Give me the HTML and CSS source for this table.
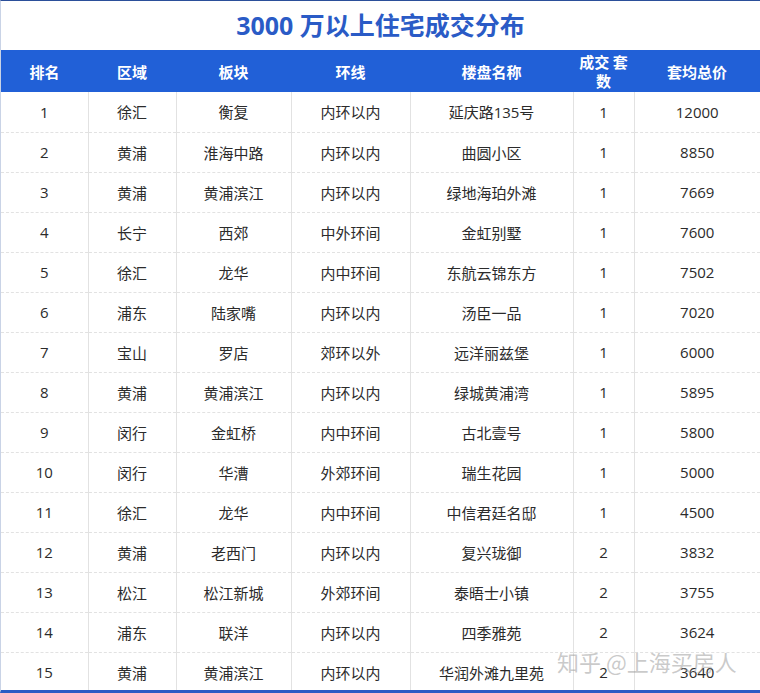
FILE: index.html
```html
<!DOCTYPE html>
<html lang="zh">
<head>
<meta charset="utf-8">
<link rel="stylesheet" href="styles.css">
</head>
<body>
<div class="sheet">
  <h1 class="title">3000 万以上住宅成交分布</h1>
  <table class="grid">
    <colgroup>
      <col class="c1"><col class="c2"><col class="c3"><col class="c4"><col class="c5"><col class="c6"><col class="c7">
    </colgroup>
    <thead>
      <tr><th>排名</th><th>区域</th><th>板块</th><th>环线</th><th>楼盘名称</th><th class="narrow">成交 套数</th><th>套均总价</th></tr>
    </thead>
    <tbody>
      <tr><td>1</td><td>徐汇</td><td>衡复</td><td>内环以内</td><td>延庆路135号</td><td>1</td><td>12000</td></tr>
      <tr><td>2</td><td>黄浦</td><td>淮海中路</td><td>内环以内</td><td>曲圆小区</td><td>1</td><td>8850</td></tr>
      <tr><td>3</td><td>黄浦</td><td>黄浦滨江</td><td>内环以内</td><td>绿地海珀外滩</td><td>1</td><td>7669</td></tr>
      <tr><td>4</td><td>长宁</td><td>西郊</td><td>中外环间</td><td>金虹别墅</td><td>1</td><td>7600</td></tr>
      <tr><td>5</td><td>徐汇</td><td>龙华</td><td>内中环间</td><td>东航云锦东方</td><td>1</td><td>7502</td></tr>
      <tr><td>6</td><td>浦东</td><td>陆家嘴</td><td>内环以内</td><td>汤臣一品</td><td>1</td><td>7020</td></tr>
      <tr><td>7</td><td>宝山</td><td>罗店</td><td>郊环以外</td><td>远洋丽兹堡</td><td>1</td><td>6000</td></tr>
      <tr><td>8</td><td>黄浦</td><td>黄浦滨江</td><td>内环以内</td><td>绿城黄浦湾</td><td>1</td><td>5895</td></tr>
      <tr><td>9</td><td>闵行</td><td>金虹桥</td><td>内中环间</td><td>古北壹号</td><td>1</td><td>5800</td></tr>
      <tr><td>10</td><td>闵行</td><td>华漕</td><td>外郊环间</td><td>瑞生花园</td><td>1</td><td>5000</td></tr>
      <tr><td>11</td><td>徐汇</td><td>龙华</td><td>内中环间</td><td>中信君廷名邸</td><td>1</td><td>4500</td></tr>
      <tr><td>12</td><td>黄浦</td><td>老西门</td><td>内环以内</td><td>复兴珑御</td><td>2</td><td>3832</td></tr>
      <tr><td>13</td><td>松江</td><td>松江新城</td><td>外郊环间</td><td>泰晤士小镇</td><td>2</td><td>3755</td></tr>
      <tr><td>14</td><td>浦东</td><td>联洋</td><td>内环以内</td><td>四季雅苑</td><td>2</td><td>3624</td></tr>
      <tr><td>15</td><td>黄浦</td><td>黄浦滨江</td><td>内环以内</td><td>华润外滩九里苑</td><td>2</td><td>3640</td></tr>
    </tbody>
  </table>
  <div class="watermark">知乎 @上海买房人</div>
</div>
</body>
</html>
```

FILE: styles.css
```css
* { box-sizing: border-box; }
html, body { margin: 0; padding: 0; background: #fff; }
body {
  font-family: "Open Sans", "Noto Sans CJK SC", sans-serif;
  color: #333;
}
.sheet {
  position: relative;
  width: 760px;
  height: 693px;
  border-top: 1px solid #2b4f9a;
  border-left: 1px solid #c9d3e6;
  border-bottom: 3px solid #2b5bc4;
  overflow: hidden;
}
.title {
  margin: 0;
  height: 49px;
  line-height: 49px;
  text-align: center;
  font-family: "Open Sans", "Noto Sans CJK SC", sans-serif;
  font-size: 25px;
  font-weight: 700;
  color: #2a5bc6;
}
.grid {
  width: 759px;
  border-collapse: collapse;
  table-layout: fixed;
}
.c1 { width: 87px; }
.c2 { width: 88px; }
.c3 { width: 115px; }
.c4 { width: 119px; }
.c5 { width: 163px; }
.c6 { width: 61px; }
.c7 { width: 126px; }
.grid th {
  height: 42px;
  background: #2160d7;
  color: #fff;
  font-family: "Noto Sans CJK SC", sans-serif;
  font-size: 15px;
  font-weight: 700;
  line-height: 19px;
  padding: 0 4px;
  text-align: center;
}
.grid td {
  height: 40px;
  padding: 0;
  text-align: center;
  font-size: 15px;
  color: #2b2b2b;
  border-left: 1px solid #e2e2e2;
  border-top: 1px dashed #e2e2e2;
}
.grid td:first-child { border-left: none; }
.grid tbody tr:first-child td { border-top: none; }
.watermark {
  position: absolute;
  left: 556px;
  top: 644px;
  font-family: "Noto Sans CJK SC", sans-serif;
  font-size: 22px;
  color: rgba(150, 150, 150, 0.5);
  white-space: nowrap;
}
```
